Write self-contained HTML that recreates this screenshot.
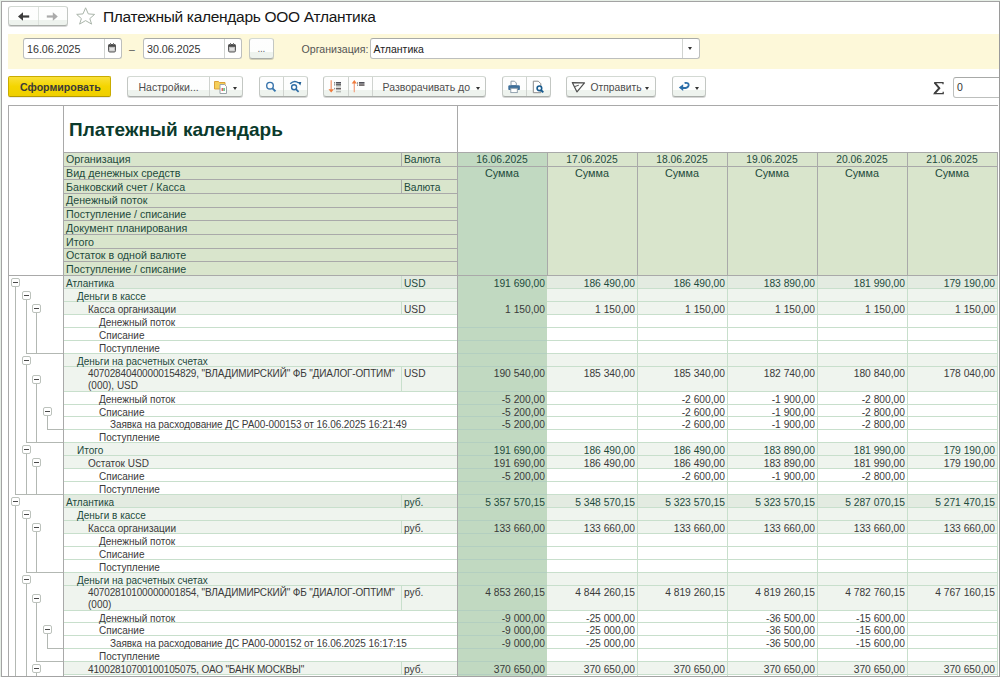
<!DOCTYPE html>
<html><head><meta charset="utf-8"><style>
html,body{margin:0;padding:0;width:1000px;height:677px;overflow:hidden;background:#e6eee6;}
body{position:relative;font-family:"Liberation Sans", sans-serif;}
.r{position:absolute;}
.t{position:absolute;white-space:nowrap;}
.btn{position:absolute;box-sizing:border-box;border:1px solid #c3c7c3;border-top-color:#d3d9d3;border-bottom-color:#a9ada9;border-radius:3px;background:linear-gradient(#fefefe 0,#fdfefd 66%,#eef3ee 66%,#eef3ee 100%);box-shadow:0 1px 0 rgba(0,0,0,0.16);}
.inp{position:absolute;box-sizing:border-box;border:1px solid #bdbfbd;border-top-color:#a8aaa8;border-radius:3px;background:#fff;}
.arr{position:absolute;width:0;height:0;border-left:2.5px solid transparent;border-right:2.5px solid transparent;border-top:3px solid #333;}
.cal{width:8px;height:7px;box-sizing:border-box;border:1px solid #666;border-top:2px solid #555;border-radius:1px;background:#f4f4f4;}
</style></head><body>
<div class="r" style="left:1px;top:1px;width:999px;height:676px;background:#fff;box-sizing:border-box;border:1px solid #a3a3a3;"></div>
<!-- nav -->
<div class="btn" style="left:8px;top:6px;width:60px;height:20px;background:linear-gradient(#fefefe 0,#fdfefd 74%,#eef3ee 74%,#eef3ee 100%);"></div>
<div class="r" style="left:38px;top:7px;width:1px;height:18px;background:#dde2dd;"></div>
<svg class="r" style="left:0;top:0" width="100" height="30" viewBox="0 0 100 30">
  <path d="M18 16.5 L23 12.3 L23 20.7 Z" fill="#3b3b3b"/>
  <rect x="22" y="15.4" width="7.2" height="2.2" fill="#3b3b3b"/>
  <path d="M57.8 16.5 L52.8 12.3 L52.8 20.7 Z" fill="#ababab"/>
  <rect x="46.8" y="15.4" width="6.5" height="2.2" fill="#ababab"/>
  <path d="M85.6 7.8 L88.3 13.9 L94.6 14.4 L89.8 18.6 L91.6 24.1 L85.6 20.6 L79.6 24.1 L81.4 18.6 L76.7 14.4 L83 13.9 Z" stroke="#aab5aa" stroke-width="1" fill="none" stroke-linejoin="round"/>
</svg>
<div class="t" style="left:103px;top:8.5px;font-size:15.5px;line-height:16px;color:#161616;letter-spacing:-0.3px;">Платежный календарь ООО Атлантика</div>
<!-- yellow band -->
<div class="r" style="left:8px;top:34px;width:992px;height:35px;background:#fdf8d9;"></div>
<!-- date 1 -->
<div class="inp" style="left:23px;top:38px;width:99px;height:21px;"></div>
<div class="r" style="left:104px;top:39px;width:1px;height:19px;background:#d0d3d0;"></div>
<div class="t" style="left:27px;top:42px;font-size:10.7px;line-height:14px;color:#333;">16.06.2025</div>
<svg class="r" style="left:107px;top:42px" width="10" height="11" viewBox="0 0 10 11">
  <rect x="1.5" y="2.5" width="7" height="7.5" rx="1.3" fill="#c4c4c4" stroke="#5a5a5a" stroke-width="1"/>
  <rect x="1.5" y="2.5" width="7" height="2.3" fill="#4a4a4a"/>
  <rect x="3" y="1" width="1" height="2" fill="#777"/>
  <rect x="6" y="1" width="1" height="2" fill="#777"/>
  <rect x="3" y="6" width="4" height="2.5" fill="#e2e2e2"/>
</svg>
<div class="t" style="left:129px;top:42px;font-size:10.5px;line-height:14px;color:#555;">–</div>
<!-- date 2 -->
<div class="inp" style="left:143px;top:38px;width:99px;height:21px;"></div>
<div class="r" style="left:224px;top:39px;width:1px;height:19px;background:#d0d3d0;"></div>
<div class="t" style="left:147px;top:42px;font-size:10.7px;line-height:14px;color:#333;">30.06.2025</div>
<svg class="r" style="left:227px;top:42px" width="10" height="11" viewBox="0 0 10 11">
  <rect x="1.5" y="2.5" width="7" height="7.5" rx="1.3" fill="#c4c4c4" stroke="#5a5a5a" stroke-width="1"/>
  <rect x="1.5" y="2.5" width="7" height="2.3" fill="#4a4a4a"/>
  <rect x="3" y="1" width="1" height="2" fill="#777"/>
  <rect x="6" y="1" width="1" height="2" fill="#777"/>
  <rect x="3" y="6" width="4" height="2.5" fill="#e2e2e2"/>
</svg>
<!-- ... button -->
<div class="btn" style="left:249px;top:38px;width:25px;height:21px;"></div>
<div class="t" style="left:257.5px;top:42px;font-size:10px;line-height:14px;color:#666;letter-spacing:-0.3px">...</div>
<div class="t" style="left:301.5px;top:42px;font-size:10.6px;line-height:14px;color:#555;">Организация:</div>
<div class="inp" style="left:370px;top:38px;width:330px;height:21px;"></div>
<div class="r" style="left:682px;top:39px;width:1px;height:19px;background:#d0d3d0;"></div>
<div class="t" style="left:373.5px;top:42px;font-size:10.5px;line-height:14px;color:#222;">Атлантика</div>
<div class="arr" style="left:688px;top:47px;"></div>
<!-- toolbar -->
<div class="r" style="left:8px;top:76px;width:103px;height:21px;box-sizing:border-box;border:1px solid #c9ac00;border-bottom-color:#b59a00;border-radius:2px;background:linear-gradient(#f9e03a,#f4d500 50%,#efcf00);box-shadow:0 1px 0 rgba(0,0,0,0.08);"></div>
<div class="t" style="left:20px;top:80px;font-size:10.6px;line-height:14px;color:#3a3a3a;font-weight:bold;">Сформировать</div>

<div class="btn" style="left:127px;top:76px;width:116px;height:21px;"></div>
<div class="r" style="left:209px;top:77px;width:1px;height:19px;background:#cfd3cf;"></div>
<div class="t" style="left:138.5px;top:80px;font-size:10.5px;line-height:14px;color:#4d4d4d;">Настройки...</div>
<svg class="r" style="left:212px;top:78px" width="18" height="18" viewBox="0 0 18 18">
  <path d="M2.5 3.5 h4 l1 1 h5.5 v6.5 h-10.5 z" fill="#f5cf5a" stroke="#dba23a" stroke-width="1"/>
  <path d="M8 6.5 h4.5 l2 2 v7 h-6.5 z" fill="#fff" stroke="#9aa3a8" stroke-width="1"/>
  <rect x="9.6" y="10" width="1.3" height="3" fill="#e05050"/>
  <rect x="11.4" y="10" width="1.3" height="3" fill="#40b060"/>
</svg>
<div class="arr" style="left:233px;top:87px;"></div>

<div class="btn" style="left:259px;top:76px;width:49px;height:21px;"></div>
<div class="r" style="left:283px;top:77px;width:1px;height:19px;background:#cfd3cf;"></div>
<svg class="r" style="left:259px;top:76px" width="50" height="21" viewBox="0 0 50 21">
  <circle cx="11" cy="9.7" r="3.3" stroke="#3874ac" stroke-width="1.4" fill="none"/>
  <path d="M13.5 12.3 L16.5 15.3" stroke="#3575ae" stroke-width="1.9"/>
  <circle cx="35.1" cy="11.2" r="2.5" stroke="#2f6ea6" stroke-width="1.4" fill="none"/>
  <path d="M36.9 13.1 L39.6 15.8" stroke="#2f6ea6" stroke-width="1.7"/>
  <path d="M31.2 7.8 Q35.3 3.6 39.6 7" stroke="#2f6ea6" stroke-width="1.3" fill="none"/>
  <path d="M38.6 6.1 L42.3 6.1 L41.3 9.6 Z" fill="#1f5f96"/>
</svg>

<div class="btn" style="left:323px;top:76px;width:163px;height:21px;"></div>
<div class="r" style="left:348px;top:77px;width:1px;height:19px;background:#cfd3cf;"></div>
<div class="r" style="left:372px;top:77px;width:1px;height:19px;background:#cfd3cf;"></div>
<svg class="r" style="left:323px;top:76px" width="50" height="21" viewBox="0 0 50 21">
  <path d="M8.2 4.3 V13.5" stroke="#f2a07a" stroke-width="1.4"/>
  <path d="M5.5 13.2 L10.9 13.2 L8.2 16.5 Z" fill="#f07a3a"/>
  <rect x="11" y="6" width="1.2" height="1.6" fill="#888"/>
  <rect x="11" y="8.1" width="1.2" height="1.5" fill="#999"/>
  <rect x="11" y="11.8" width="1.2" height="1.6" fill="#999"/>
  <rect x="13" y="6" width="5" height="1.6" fill="#4d4d55"/>
  <rect x="13" y="8.1" width="5" height="1.5" fill="#5a5a5a"/>
  <rect x="13" y="9.9" width="5" height="1.3" fill="#d0d4d0"/>
  <rect x="13" y="11.8" width="5" height="1.7" fill="#6a6262"/>
  <rect x="13" y="14.8" width="5" height="1.6" fill="#b8bcb8"/>
  <path d="M31.3 6.5 V16.3" stroke="#f3a585" stroke-width="1.3"/>
  <path d="M28.7 7.4 L33.9 7.4 L31.3 4.1 Z" fill="#f07a3a"/>
  <rect x="34" y="6.2" width="1.1" height="1.6" fill="#888"/>
  <rect x="34" y="8.4" width="1.1" height="1.6" fill="#999"/>
  <rect x="36" y="6" width="5.5" height="1.7" fill="#505058"/>
  <rect x="36" y="8.2" width="5.5" height="1.7" fill="#6a6464"/>
</svg>
<div class="t" style="left:382.5px;top:80px;font-size:10.5px;line-height:14px;color:#4d4d4d;">Разворачивать до</div>
<div class="arr" style="left:476px;top:87px;"></div>

<div class="btn" style="left:502px;top:76px;width:49px;height:21px;"></div>
<div class="r" style="left:526px;top:77px;width:1px;height:19px;background:#cfd3cf;"></div>
<svg class="r" style="left:502px;top:76px" width="50" height="21" viewBox="0 0 50 21">
  <path d="M9 5.2 h3.5 l1.8 1.8 v2.5 h-5.3 z" fill="#fff" stroke="#8a9aa8" stroke-width="1"/>
  <rect x="6.3" y="9.3" width="11.6" height="4.8" rx="1.2" fill="#3e6f9a"/>
  <rect x="8.8" y="12.3" width="6.5" height="4.3" fill="#fff" stroke="#8a9aa8" stroke-width="0.9"/>
  <path d="M31.3 5.2 h5 l2.5 2.5 v9 h-7.5 z" fill="#fff" stroke="#8a8a8a" stroke-width="1"/>
  <circle cx="37.4" cy="12.3" r="2.3" stroke="#165a8e" stroke-width="1.6" fill="#fff"/>
  <path d="M38.9 14 L41.3 16.4" stroke="#165a8e" stroke-width="1.9"/>
</svg>

<div class="btn" style="left:566px;top:76px;width:90px;height:21px;"></div>
<svg class="r" style="left:566px;top:76px" width="24" height="21" viewBox="0 0 24 21">
  <path d="M6.3 6.6 L18.5 6.9 L11 15.9 Z" stroke="#505050" stroke-width="1.2" fill="none" stroke-linejoin="round"/>
  <path d="M8.6 10.6 L12.8 9.2" stroke="#505050" stroke-width="1"/>
</svg>
<div class="t" style="left:590.5px;top:81px;font-size:10.3px;line-height:14px;color:#4d4d4d;">Отправить</div>
<div class="arr" style="left:645px;top:87px;"></div>

<div class="btn" style="left:672px;top:76px;width:34px;height:21px;"></div>
<svg class="r" style="left:672px;top:76px" width="34" height="21" viewBox="0 0 34 21">
  <path d="M10.5 12 Q15.8 12.4 16.6 9.4 Q17.1 6.2 12.6 7" stroke="#2b6ea8" stroke-width="1.9" fill="none"/>
  <path d="M6.8 11.6 L11.2 8.3 L11.2 15 Z" fill="#2b6ea8"/>
</svg>
<div class="arr" style="left:694.5px;top:87px;"></div>

<svg class="r" style="left:930px;top:78px" width="16" height="18" viewBox="0 0 16 18">
  <path d="M4.2 4.6 H13 V6.3 M4.6 4.6 L9.3 10.2 L4.4 15.6 H13.2 V13.8" stroke="#404040" stroke-width="1.3" fill="none" stroke-linejoin="miter"/>
  <path d="M4.6 4.6 L9.3 10.2 L4.4 15.6" stroke="#404040" stroke-width="1.9" fill="none"/>
</svg>
<div class="inp" style="left:953px;top:77px;width:60px;height:21px;border-radius:3px;"></div>
<div class="t" style="left:957px;top:80px;font-size:10.5px;line-height:14px;color:#333;">0</div>

<div class="r" style="left:2px;top:2px;width:996px;height:674px;overflow:hidden;">
<div class="r" style="left:61px;top:150px;width:945px;height:123px;background:#d9e5cc;"></div>
<div class="r" style="left:455px;top:150px;width:90px;height:123px;background:#c1d9c1;"></div>
<div class="r" style="left:61px;top:273px;width:945px;height:13px;background:#e3ebe1;"></div>
<div class="r" style="left:61px;top:286px;width:945px;height:13px;background:#eff4ee;"></div>
<div class="r" style="left:61px;top:299px;width:945px;height:13px;background:#eff4ee;"></div>
<div class="r" style="left:61px;top:312px;width:945px;height:13px;background:#fff;"></div>
<div class="r" style="left:61px;top:325px;width:945px;height:13px;background:#fff;"></div>
<div class="r" style="left:61px;top:338px;width:945px;height:13px;background:#fff;"></div>
<div class="r" style="left:61px;top:351px;width:945px;height:13px;background:#eff4ee;"></div>
<div class="r" style="left:61px;top:364px;width:945px;height:25px;background:#eff4ee;"></div>
<div class="r" style="left:61px;top:389px;width:945px;height:13px;background:#fff;"></div>
<div class="r" style="left:61px;top:402px;width:945px;height:12px;background:#fff;"></div>
<div class="r" style="left:61px;top:414px;width:945px;height:13px;background:#fff;"></div>
<div class="r" style="left:61px;top:427px;width:945px;height:13px;background:#fff;"></div>
<div class="r" style="left:61px;top:440px;width:945px;height:13px;background:#eff4ee;"></div>
<div class="r" style="left:61px;top:453px;width:945px;height:13px;background:#eff4ee;"></div>
<div class="r" style="left:61px;top:466px;width:945px;height:13px;background:#fff;"></div>
<div class="r" style="left:61px;top:479px;width:945px;height:13px;background:#fff;"></div>
<div class="r" style="left:61px;top:492px;width:945px;height:13px;background:#e3ebe1;"></div>
<div class="r" style="left:61px;top:505px;width:945px;height:13px;background:#eff4ee;"></div>
<div class="r" style="left:61px;top:518px;width:945px;height:13px;background:#eff4ee;"></div>
<div class="r" style="left:61px;top:531px;width:945px;height:13px;background:#fff;"></div>
<div class="r" style="left:61px;top:544px;width:945px;height:13px;background:#fff;"></div>
<div class="r" style="left:61px;top:557px;width:945px;height:13px;background:#fff;"></div>
<div class="r" style="left:61px;top:570px;width:945px;height:13px;background:#eff4ee;"></div>
<div class="r" style="left:61px;top:583px;width:945px;height:25px;background:#eff4ee;"></div>
<div class="r" style="left:61px;top:608px;width:945px;height:12px;background:#fff;"></div>
<div class="r" style="left:61px;top:620px;width:945px;height:13px;background:#fff;"></div>
<div class="r" style="left:61px;top:633px;width:945px;height:13px;background:#fff;"></div>
<div class="r" style="left:61px;top:646px;width:945px;height:13px;background:#fff;"></div>
<div class="r" style="left:61px;top:659px;width:945px;height:13px;background:#eff4ee;"></div>
<div class="r" style="left:61px;top:286px;width:945px;height:1px;background:#c8dfcc;"></div>
<div class="r" style="left:399px;top:273px;width:1px;height:13px;background:#c8dfcc;"></div>
<div class="r" style="left:61px;top:299px;width:945px;height:1px;background:#c8dfcc;"></div>
<div class="r" style="left:61px;top:312px;width:945px;height:1px;background:#c8dfcc;"></div>
<div class="r" style="left:399px;top:299px;width:1px;height:13px;background:#c8dfcc;"></div>
<div class="r" style="left:61px;top:325px;width:945px;height:1px;background:#c8dfcc;"></div>
<div class="r" style="left:61px;top:338px;width:945px;height:1px;background:#c8dfcc;"></div>
<div class="r" style="left:61px;top:351px;width:945px;height:1px;background:#c8dfcc;"></div>
<div class="r" style="left:61px;top:364px;width:945px;height:1px;background:#c8dfcc;"></div>
<div class="r" style="left:61px;top:389px;width:945px;height:1px;background:#c8dfcc;"></div>
<div class="r" style="left:399px;top:364px;width:1px;height:25px;background:#c8dfcc;"></div>
<div class="r" style="left:61px;top:402px;width:945px;height:1px;background:#c8dfcc;"></div>
<div class="r" style="left:61px;top:414px;width:945px;height:1px;background:#c8dfcc;"></div>
<div class="r" style="left:61px;top:427px;width:945px;height:1px;background:#c8dfcc;"></div>
<div class="r" style="left:61px;top:440px;width:945px;height:1px;background:#c8dfcc;"></div>
<div class="r" style="left:61px;top:453px;width:945px;height:1px;background:#c8dfcc;"></div>
<div class="r" style="left:61px;top:466px;width:945px;height:1px;background:#c8dfcc;"></div>
<div class="r" style="left:61px;top:479px;width:945px;height:1px;background:#c8dfcc;"></div>
<div class="r" style="left:61px;top:492px;width:945px;height:1px;background:#c8dfcc;"></div>
<div class="r" style="left:61px;top:505px;width:945px;height:1px;background:#c8dfcc;"></div>
<div class="r" style="left:399px;top:492px;width:1px;height:13px;background:#c8dfcc;"></div>
<div class="r" style="left:61px;top:518px;width:945px;height:1px;background:#c8dfcc;"></div>
<div class="r" style="left:61px;top:531px;width:945px;height:1px;background:#c8dfcc;"></div>
<div class="r" style="left:399px;top:518px;width:1px;height:13px;background:#c8dfcc;"></div>
<div class="r" style="left:61px;top:544px;width:945px;height:1px;background:#c8dfcc;"></div>
<div class="r" style="left:61px;top:557px;width:945px;height:1px;background:#c8dfcc;"></div>
<div class="r" style="left:61px;top:570px;width:945px;height:1px;background:#c8dfcc;"></div>
<div class="r" style="left:61px;top:583px;width:945px;height:1px;background:#c8dfcc;"></div>
<div class="r" style="left:61px;top:608px;width:945px;height:1px;background:#c8dfcc;"></div>
<div class="r" style="left:399px;top:583px;width:1px;height:25px;background:#c8dfcc;"></div>
<div class="r" style="left:61px;top:620px;width:945px;height:1px;background:#c8dfcc;"></div>
<div class="r" style="left:61px;top:633px;width:945px;height:1px;background:#c8dfcc;"></div>
<div class="r" style="left:61px;top:646px;width:945px;height:1px;background:#c8dfcc;"></div>
<div class="r" style="left:61px;top:659px;width:945px;height:1px;background:#c8dfcc;"></div>
<div class="r" style="left:61px;top:672px;width:945px;height:1px;background:#c8dfcc;"></div>
<div class="r" style="left:399px;top:659px;width:1px;height:13px;background:#c8dfcc;"></div>
<div class="r" style="left:455px;top:273px;width:90px;height:700px;background:#c1d9c1;"></div>
<div class="r" style="left:455px;top:325px;width:90px;height:1px;background:#b3cfc0;"></div>
<div class="r" style="left:455px;top:338px;width:90px;height:1px;background:#b3cfc0;"></div>
<div class="r" style="left:455px;top:351px;width:90px;height:1px;background:#b3cfc0;"></div>
<div class="r" style="left:455px;top:364px;width:90px;height:1px;background:#b3cfc0;"></div>
<div class="r" style="left:455px;top:389px;width:90px;height:1px;background:#b3cfc0;"></div>
<div class="r" style="left:455px;top:402px;width:90px;height:1px;background:#b3cfc0;"></div>
<div class="r" style="left:455px;top:414px;width:90px;height:1px;background:#b3cfc0;"></div>
<div class="r" style="left:455px;top:427px;width:90px;height:1px;background:#b3cfc0;"></div>
<div class="r" style="left:455px;top:440px;width:90px;height:1px;background:#b3cfc0;"></div>
<div class="r" style="left:455px;top:453px;width:90px;height:1px;background:#b3cfc0;"></div>
<div class="r" style="left:455px;top:466px;width:90px;height:1px;background:#b3cfc0;"></div>
<div class="r" style="left:455px;top:479px;width:90px;height:1px;background:#b3cfc0;"></div>
<div class="r" style="left:455px;top:492px;width:90px;height:1px;background:#b3cfc0;"></div>
<div class="r" style="left:455px;top:505px;width:90px;height:1px;background:#b3cfc0;"></div>
<div class="r" style="left:455px;top:518px;width:90px;height:1px;background:#b3cfc0;"></div>
<div class="r" style="left:455px;top:531px;width:90px;height:1px;background:#b3cfc0;"></div>
<div class="r" style="left:455px;top:544px;width:90px;height:1px;background:#b3cfc0;"></div>
<div class="r" style="left:455px;top:557px;width:90px;height:1px;background:#b3cfc0;"></div>
<div class="r" style="left:455px;top:570px;width:90px;height:1px;background:#b3cfc0;"></div>
<div class="r" style="left:455px;top:583px;width:90px;height:1px;background:#b3cfc0;"></div>
<div class="r" style="left:455px;top:608px;width:90px;height:1px;background:#b3cfc0;"></div>
<div class="r" style="left:455px;top:620px;width:90px;height:1px;background:#b3cfc0;"></div>
<div class="r" style="left:455px;top:633px;width:90px;height:1px;background:#b3cfc0;"></div>
<div class="r" style="left:455px;top:646px;width:90px;height:1px;background:#b3cfc0;"></div>
<div class="r" style="left:455px;top:659px;width:90px;height:1px;background:#b3cfc0;"></div>
<div class="r" style="left:455px;top:672px;width:90px;height:1px;background:#b3cfc0;"></div>
<div class="r" style="left:635px;top:273px;width:1px;height:700px;background:#c8dfcc;"></div>
<div class="r" style="left:725px;top:273px;width:1px;height:700px;background:#c8dfcc;"></div>
<div class="r" style="left:815px;top:273px;width:1px;height:700px;background:#c8dfcc;"></div>
<div class="r" style="left:905px;top:273px;width:1px;height:700px;background:#c8dfcc;"></div>
<div class="r" style="left:995px;top:273px;width:1px;height:700px;background:#c8dfcc;"></div>
<div class="r" style="left:61px;top:150px;width:945px;height:1px;background:#a9a9a9;"></div>
<div class="r" style="left:61px;top:164px;width:394px;height:1px;background:#a9a9a9;"></div>
<div class="r" style="left:61px;top:177px;width:394px;height:1px;background:#a9a9a9;"></div>
<div class="r" style="left:61px;top:191px;width:394px;height:1px;background:#a9a9a9;"></div>
<div class="r" style="left:61px;top:205px;width:394px;height:1px;background:#a9a9a9;"></div>
<div class="r" style="left:61px;top:218px;width:394px;height:1px;background:#a9a9a9;"></div>
<div class="r" style="left:61px;top:232px;width:394px;height:1px;background:#a9a9a9;"></div>
<div class="r" style="left:61px;top:246px;width:394px;height:1px;background:#a9a9a9;"></div>
<div class="r" style="left:61px;top:259px;width:394px;height:1px;background:#a9a9a9;"></div>
<div class="r" style="left:455px;top:164px;width:551px;height:1px;background:#a9a9a9;"></div>
<div class="r" style="left:6px;top:273px;width:1000px;height:1px;background:#a9a9a9;"></div>
<div class="r" style="left:399px;top:150px;width:1px;height:14px;background:#a9a9a9;"></div>
<div class="r" style="left:399px;top:177px;width:1px;height:14px;background:#a9a9a9;"></div>
<div class="r" style="left:545px;top:150px;width:1px;height:123px;background:#a9a9a9;"></div>
<div class="r" style="left:635px;top:150px;width:1px;height:123px;background:#a9a9a9;"></div>
<div class="r" style="left:725px;top:150px;width:1px;height:123px;background:#a9a9a9;"></div>
<div class="r" style="left:815px;top:150px;width:1px;height:123px;background:#a9a9a9;"></div>
<div class="r" style="left:905px;top:150px;width:1px;height:123px;background:#a9a9a9;"></div>
<div class="r" style="left:995px;top:150px;width:1px;height:123px;background:#a9a9a9;"></div>
<div class="r" style="left:6px;top:103px;width:1000px;height:1px;background:#a9a9a9;"></div>
<div class="r" style="left:6px;top:103px;width:1px;height:700px;background:#a9a9a9;"></div>
<div class="r" style="left:61px;top:103px;width:1px;height:700px;background:#a9a9a9;"></div>
<div class="r" style="left:455px;top:103px;width:1px;height:700px;background:#a9a9a9;"></div>
<div class="r" style="left:13px;top:285px;width:1px;height:207px;background:#b3b8b3;"></div>
<div class="r" style="left:13px;top:492px;width:48px;height:1px;background:#b3b8b3;"></div>
<div class="r" style="left:9px;top:276px;width:9px;height:9px;background:#fff;box-sizing:border-box;border:1px solid #bcc2bc;border-radius:2px;"></div>
<div class="r" style="left:11px;top:280px;width:5px;height:1px;background:#4a4a4a;"></div>
<div class="r" style="left:24px;top:298px;width:1px;height:53px;background:#b3b8b3;"></div>
<div class="r" style="left:24px;top:351px;width:37px;height:1px;background:#b3b8b3;"></div>
<div class="r" style="left:20px;top:289px;width:9px;height:9px;background:#fff;box-sizing:border-box;border:1px solid #bcc2bc;border-radius:2px;"></div>
<div class="r" style="left:22px;top:293px;width:5px;height:1px;background:#4a4a4a;"></div>
<div class="r" style="left:34px;top:311px;width:1px;height:40px;background:#b3b8b3;"></div>
<div class="r" style="left:34px;top:351px;width:27px;height:1px;background:#b3b8b3;"></div>
<div class="r" style="left:30px;top:302px;width:9px;height:9px;background:#fff;box-sizing:border-box;border:1px solid #bcc2bc;border-radius:2px;"></div>
<div class="r" style="left:32px;top:306px;width:5px;height:1px;background:#4a4a4a;"></div>
<div class="r" style="left:24px;top:363px;width:1px;height:77px;background:#b3b8b3;"></div>
<div class="r" style="left:24px;top:440px;width:37px;height:1px;background:#b3b8b3;"></div>
<div class="r" style="left:20px;top:354px;width:9px;height:9px;background:#fff;box-sizing:border-box;border:1px solid #bcc2bc;border-radius:2px;"></div>
<div class="r" style="left:22px;top:358px;width:5px;height:1px;background:#4a4a4a;"></div>
<div class="r" style="left:34px;top:382px;width:1px;height:58px;background:#b3b8b3;"></div>
<div class="r" style="left:34px;top:440px;width:27px;height:1px;background:#b3b8b3;"></div>
<div class="r" style="left:30px;top:373px;width:9px;height:9px;background:#fff;box-sizing:border-box;border:1px solid #bcc2bc;border-radius:2px;"></div>
<div class="r" style="left:32px;top:377px;width:5px;height:1px;background:#4a4a4a;"></div>
<div class="r" style="left:45px;top:414px;width:1px;height:13px;background:#b3b8b3;"></div>
<div class="r" style="left:45px;top:427px;width:16px;height:1px;background:#b3b8b3;"></div>
<div class="r" style="left:41px;top:405px;width:9px;height:9px;background:#fff;box-sizing:border-box;border:1px solid #bcc2bc;border-radius:2px;"></div>
<div class="r" style="left:43px;top:409px;width:5px;height:1px;background:#4a4a4a;"></div>
<div class="r" style="left:24px;top:452px;width:1px;height:40px;background:#b3b8b3;"></div>
<div class="r" style="left:24px;top:492px;width:37px;height:1px;background:#b3b8b3;"></div>
<div class="r" style="left:20px;top:443px;width:9px;height:9px;background:#fff;box-sizing:border-box;border:1px solid #bcc2bc;border-radius:2px;"></div>
<div class="r" style="left:22px;top:447px;width:5px;height:1px;background:#4a4a4a;"></div>
<div class="r" style="left:34px;top:465px;width:1px;height:27px;background:#b3b8b3;"></div>
<div class="r" style="left:34px;top:492px;width:27px;height:1px;background:#b3b8b3;"></div>
<div class="r" style="left:30px;top:456px;width:9px;height:9px;background:#fff;box-sizing:border-box;border:1px solid #bcc2bc;border-radius:2px;"></div>
<div class="r" style="left:32px;top:460px;width:5px;height:1px;background:#4a4a4a;"></div>
<div class="r" style="left:13px;top:504px;width:1px;height:194px;background:#b3b8b3;"></div>
<div class="r" style="left:9px;top:495px;width:9px;height:9px;background:#fff;box-sizing:border-box;border:1px solid #bcc2bc;border-radius:2px;"></div>
<div class="r" style="left:11px;top:499px;width:5px;height:1px;background:#4a4a4a;"></div>
<div class="r" style="left:24px;top:517px;width:1px;height:53px;background:#b3b8b3;"></div>
<div class="r" style="left:24px;top:570px;width:37px;height:1px;background:#b3b8b3;"></div>
<div class="r" style="left:20px;top:508px;width:9px;height:9px;background:#fff;box-sizing:border-box;border:1px solid #bcc2bc;border-radius:2px;"></div>
<div class="r" style="left:22px;top:512px;width:5px;height:1px;background:#4a4a4a;"></div>
<div class="r" style="left:34px;top:530px;width:1px;height:40px;background:#b3b8b3;"></div>
<div class="r" style="left:34px;top:570px;width:27px;height:1px;background:#b3b8b3;"></div>
<div class="r" style="left:30px;top:521px;width:9px;height:9px;background:#fff;box-sizing:border-box;border:1px solid #bcc2bc;border-radius:2px;"></div>
<div class="r" style="left:32px;top:525px;width:5px;height:1px;background:#4a4a4a;"></div>
<div class="r" style="left:24px;top:582px;width:1px;height:116px;background:#b3b8b3;"></div>
<div class="r" style="left:20px;top:573px;width:9px;height:9px;background:#fff;box-sizing:border-box;border:1px solid #bcc2bc;border-radius:2px;"></div>
<div class="r" style="left:22px;top:577px;width:5px;height:1px;background:#4a4a4a;"></div>
<div class="r" style="left:34px;top:601px;width:1px;height:58px;background:#b3b8b3;"></div>
<div class="r" style="left:34px;top:659px;width:27px;height:1px;background:#b3b8b3;"></div>
<div class="r" style="left:30px;top:592px;width:9px;height:9px;background:#fff;box-sizing:border-box;border:1px solid #bcc2bc;border-radius:2px;"></div>
<div class="r" style="left:32px;top:596px;width:5px;height:1px;background:#4a4a4a;"></div>
<div class="r" style="left:45px;top:632px;width:1px;height:14px;background:#b3b8b3;"></div>
<div class="r" style="left:45px;top:646px;width:16px;height:1px;background:#b3b8b3;"></div>
<div class="r" style="left:41px;top:623px;width:9px;height:9px;background:#fff;box-sizing:border-box;border:1px solid #bcc2bc;border-radius:2px;"></div>
<div class="r" style="left:43px;top:627px;width:5px;height:1px;background:#4a4a4a;"></div>
<div class="r" style="left:34px;top:671px;width:1px;height:27px;background:#b3b8b3;"></div>
<div class="r" style="left:30px;top:662px;width:9px;height:9px;background:#fff;box-sizing:border-box;border:1px solid #bcc2bc;border-radius:2px;"></div>
<div class="r" style="left:32px;top:666px;width:5px;height:1px;background:#4a4a4a;"></div>
<div class="t" style="left:67px;top:121.00px;font-size:19px;line-height:14px;color:#0b3a2c;font-weight:bold;">Платежный календарь</div>
<div class="t" style="left:64px;top:150.00px;font-size:10.7px;line-height:14px;color:#1d4a3c;">Организация</div>
<div class="t" style="left:64px;top:164.00px;font-size:10.7px;line-height:14px;color:#1d4a3c;">Вид денежных средств</div>
<div class="t" style="left:64px;top:178.00px;font-size:10.7px;line-height:14px;color:#1d4a3c;">Банковский счет / Касса</div>
<div class="t" style="left:64px;top:191.00px;font-size:10.7px;line-height:14px;color:#1d4a3c;">Денежный поток</div>
<div class="t" style="left:64px;top:205.00px;font-size:10.7px;line-height:14px;color:#1d4a3c;">Поступление / списание</div>
<div class="t" style="left:64px;top:219.00px;font-size:10.7px;line-height:14px;color:#1d4a3c;">Документ планирования</div>
<div class="t" style="left:64px;top:233.00px;font-size:10.7px;line-height:14px;color:#1d4a3c;">Итого</div>
<div class="t" style="left:64px;top:246.00px;font-size:10.7px;line-height:14px;color:#1d4a3c;">Остаток в одной валюте</div>
<div class="t" style="left:64px;top:260.00px;font-size:10.7px;line-height:14px;color:#1d4a3c;">Поступление / списание</div>
<div class="t" style="left:402px;top:151.00px;font-size:10.3px;line-height:14px;color:#1d4a3c;">Валюта</div>
<div class="t" style="left:402px;top:179.00px;font-size:10.3px;line-height:14px;color:#1d4a3c;">Валюта</div>
<div class="t" style="left:455px;top:151.00px;font-size:10.3px;line-height:14px;color:#1d4a3c;width:90px;text-align:center;">16.06.2025</div>
<div class="t" style="left:455px;top:164.00px;font-size:10.8px;line-height:14px;color:#1d4a3c;width:90px;text-align:center;">Сумма</div>
<div class="t" style="left:545px;top:151.00px;font-size:10.3px;line-height:14px;color:#1d4a3c;width:90px;text-align:center;">17.06.2025</div>
<div class="t" style="left:545px;top:164.00px;font-size:10.8px;line-height:14px;color:#1d4a3c;width:90px;text-align:center;">Сумма</div>
<div class="t" style="left:635px;top:151.00px;font-size:10.3px;line-height:14px;color:#1d4a3c;width:90px;text-align:center;">18.06.2025</div>
<div class="t" style="left:635px;top:164.00px;font-size:10.8px;line-height:14px;color:#1d4a3c;width:90px;text-align:center;">Сумма</div>
<div class="t" style="left:725px;top:151.00px;font-size:10.3px;line-height:14px;color:#1d4a3c;width:90px;text-align:center;">19.06.2025</div>
<div class="t" style="left:725px;top:164.00px;font-size:10.8px;line-height:14px;color:#1d4a3c;width:90px;text-align:center;">Сумма</div>
<div class="t" style="left:815px;top:151.00px;font-size:10.3px;line-height:14px;color:#1d4a3c;width:90px;text-align:center;">20.06.2025</div>
<div class="t" style="left:815px;top:164.00px;font-size:10.8px;line-height:14px;color:#1d4a3c;width:90px;text-align:center;">Сумма</div>
<div class="t" style="left:905px;top:151.00px;font-size:10.3px;line-height:14px;color:#1d4a3c;width:90px;text-align:center;">21.06.2025</div>
<div class="t" style="left:905px;top:164.00px;font-size:10.8px;line-height:14px;color:#1d4a3c;width:90px;text-align:center;">Сумма</div>
<div class="t" style="left:64px;top:275.00px;font-size:10.0px;line-height:14px;color:#1d4a3c;letter-spacing:0px;">Атлантика</div>
<div class="t" style="left:402px;top:275.00px;font-size:10.2px;line-height:14px;color:#1d4a3c;">USD</div>
<div class="t" style="left:455px;top:275.00px;font-size:10.25px;line-height:14px;color:#1d4a3c;width:88px;text-align:right;">191 690,00</div>
<div class="t" style="left:545px;top:275.00px;font-size:10.25px;line-height:14px;color:#1d4a3c;width:88px;text-align:right;">186 490,00</div>
<div class="t" style="left:635px;top:275.00px;font-size:10.25px;line-height:14px;color:#1d4a3c;width:88px;text-align:right;">186 490,00</div>
<div class="t" style="left:725px;top:275.00px;font-size:10.25px;line-height:14px;color:#1d4a3c;width:88px;text-align:right;">183 890,00</div>
<div class="t" style="left:815px;top:275.00px;font-size:10.25px;line-height:14px;color:#1d4a3c;width:88px;text-align:right;">181 990,00</div>
<div class="t" style="left:905px;top:275.00px;font-size:10.25px;line-height:14px;color:#1d4a3c;width:88px;text-align:right;">179 190,00</div>
<div class="t" style="left:75px;top:288.00px;font-size:10.0px;line-height:14px;color:#1d4a3c;letter-spacing:0px;">Деньги в кассе</div>
<div class="t" style="left:86px;top:301.00px;font-size:10.0px;line-height:14px;color:#3a3a3a;letter-spacing:0px;">Касса организации</div>
<div class="t" style="left:402px;top:301.00px;font-size:10.2px;line-height:14px;color:#3a3a3a;">USD</div>
<div class="t" style="left:455px;top:301.00px;font-size:10.25px;line-height:14px;color:#3a3a3a;width:88px;text-align:right;">1 150,00</div>
<div class="t" style="left:545px;top:301.00px;font-size:10.25px;line-height:14px;color:#3a3a3a;width:88px;text-align:right;">1 150,00</div>
<div class="t" style="left:635px;top:301.00px;font-size:10.25px;line-height:14px;color:#3a3a3a;width:88px;text-align:right;">1 150,00</div>
<div class="t" style="left:725px;top:301.00px;font-size:10.25px;line-height:14px;color:#3a3a3a;width:88px;text-align:right;">1 150,00</div>
<div class="t" style="left:815px;top:301.00px;font-size:10.25px;line-height:14px;color:#3a3a3a;width:88px;text-align:right;">1 150,00</div>
<div class="t" style="left:905px;top:301.00px;font-size:10.25px;line-height:14px;color:#3a3a3a;width:88px;text-align:right;">1 150,00</div>
<div class="t" style="left:97px;top:314.00px;font-size:10.0px;line-height:14px;color:#3a3a3a;letter-spacing:0px;">Денежный поток</div>
<div class="t" style="left:97px;top:327.00px;font-size:10.0px;line-height:14px;color:#3a3a3a;letter-spacing:0px;">Списание</div>
<div class="t" style="left:97px;top:340.00px;font-size:10.0px;line-height:14px;color:#3a3a3a;letter-spacing:0px;">Поступление</div>
<div class="t" style="left:75px;top:353.00px;font-size:10.0px;line-height:14px;color:#1d4a3c;letter-spacing:0px;">Деньги на расчетных счетах</div>
<div class="t" style="left:86px;top:365.00px;font-size:10.0px;line-height:14px;color:#3a3a3a;letter-spacing:-0.15px;">40702840400000154829, "ВЛАДИМИРСКИЙ" ФБ "ДИАЛОГ-ОПТИМ"</div>
<div class="t" style="left:86px;top:377.00px;font-size:10.0px;line-height:14px;color:#3a3a3a;letter-spacing:0px;">(000), USD</div>
<div class="t" style="left:402px;top:365.00px;font-size:10.2px;line-height:14px;color:#3a3a3a;">USD</div>
<div class="t" style="left:455px;top:365.00px;font-size:10.25px;line-height:14px;color:#3a3a3a;width:88px;text-align:right;">190 540,00</div>
<div class="t" style="left:545px;top:365.00px;font-size:10.25px;line-height:14px;color:#3a3a3a;width:88px;text-align:right;">185 340,00</div>
<div class="t" style="left:635px;top:365.00px;font-size:10.25px;line-height:14px;color:#3a3a3a;width:88px;text-align:right;">185 340,00</div>
<div class="t" style="left:725px;top:365.00px;font-size:10.25px;line-height:14px;color:#3a3a3a;width:88px;text-align:right;">182 740,00</div>
<div class="t" style="left:815px;top:365.00px;font-size:10.25px;line-height:14px;color:#3a3a3a;width:88px;text-align:right;">180 840,00</div>
<div class="t" style="left:905px;top:365.00px;font-size:10.25px;line-height:14px;color:#3a3a3a;width:88px;text-align:right;">178 040,00</div>
<div class="t" style="left:97px;top:391.00px;font-size:10.0px;line-height:14px;color:#3a3a3a;letter-spacing:0px;">Денежный поток</div>
<div class="t" style="left:455px;top:391.00px;font-size:10.25px;line-height:14px;color:#3a3a3a;width:88px;text-align:right;">-5 200,00</div>
<div class="t" style="left:635px;top:391.00px;font-size:10.25px;line-height:14px;color:#3a3a3a;width:88px;text-align:right;">-2 600,00</div>
<div class="t" style="left:725px;top:391.00px;font-size:10.25px;line-height:14px;color:#3a3a3a;width:88px;text-align:right;">-1 900,00</div>
<div class="t" style="left:815px;top:391.00px;font-size:10.25px;line-height:14px;color:#3a3a3a;width:88px;text-align:right;">-2 800,00</div>
<div class="t" style="left:97px;top:404.00px;font-size:10.0px;line-height:14px;color:#3a3a3a;letter-spacing:0px;">Списание</div>
<div class="t" style="left:455px;top:404.00px;font-size:10.25px;line-height:14px;color:#3a3a3a;width:88px;text-align:right;">-5 200,00</div>
<div class="t" style="left:635px;top:404.00px;font-size:10.25px;line-height:14px;color:#3a3a3a;width:88px;text-align:right;">-2 600,00</div>
<div class="t" style="left:725px;top:404.00px;font-size:10.25px;line-height:14px;color:#3a3a3a;width:88px;text-align:right;">-1 900,00</div>
<div class="t" style="left:815px;top:404.00px;font-size:10.25px;line-height:14px;color:#3a3a3a;width:88px;text-align:right;">-2 800,00</div>
<div class="t" style="left:108px;top:416.00px;font-size:10.0px;line-height:14px;color:#3a3a3a;letter-spacing:-0.08px;">Заявка на расходование ДС РА00-000153 от 16.06.2025 16:21:49</div>
<div class="t" style="left:455px;top:416.00px;font-size:10.25px;line-height:14px;color:#3a3a3a;width:88px;text-align:right;">-5 200,00</div>
<div class="t" style="left:635px;top:416.00px;font-size:10.25px;line-height:14px;color:#3a3a3a;width:88px;text-align:right;">-2 600,00</div>
<div class="t" style="left:725px;top:416.00px;font-size:10.25px;line-height:14px;color:#3a3a3a;width:88px;text-align:right;">-1 900,00</div>
<div class="t" style="left:815px;top:416.00px;font-size:10.25px;line-height:14px;color:#3a3a3a;width:88px;text-align:right;">-2 800,00</div>
<div class="t" style="left:97px;top:429.00px;font-size:10.0px;line-height:14px;color:#3a3a3a;letter-spacing:0px;">Поступление</div>
<div class="t" style="left:75px;top:442.00px;font-size:10.0px;line-height:14px;color:#1d4a3c;letter-spacing:0px;">Итого</div>
<div class="t" style="left:455px;top:442.00px;font-size:10.25px;line-height:14px;color:#1d4a3c;width:88px;text-align:right;">191 690,00</div>
<div class="t" style="left:545px;top:442.00px;font-size:10.25px;line-height:14px;color:#1d4a3c;width:88px;text-align:right;">186 490,00</div>
<div class="t" style="left:635px;top:442.00px;font-size:10.25px;line-height:14px;color:#1d4a3c;width:88px;text-align:right;">186 490,00</div>
<div class="t" style="left:725px;top:442.00px;font-size:10.25px;line-height:14px;color:#1d4a3c;width:88px;text-align:right;">183 890,00</div>
<div class="t" style="left:815px;top:442.00px;font-size:10.25px;line-height:14px;color:#1d4a3c;width:88px;text-align:right;">181 990,00</div>
<div class="t" style="left:905px;top:442.00px;font-size:10.25px;line-height:14px;color:#1d4a3c;width:88px;text-align:right;">179 190,00</div>
<div class="t" style="left:86px;top:455.00px;font-size:10.0px;line-height:14px;color:#3a3a3a;letter-spacing:0px;">Остаток USD</div>
<div class="t" style="left:455px;top:455.00px;font-size:10.25px;line-height:14px;color:#3a3a3a;width:88px;text-align:right;">191 690,00</div>
<div class="t" style="left:545px;top:455.00px;font-size:10.25px;line-height:14px;color:#3a3a3a;width:88px;text-align:right;">186 490,00</div>
<div class="t" style="left:635px;top:455.00px;font-size:10.25px;line-height:14px;color:#3a3a3a;width:88px;text-align:right;">186 490,00</div>
<div class="t" style="left:725px;top:455.00px;font-size:10.25px;line-height:14px;color:#3a3a3a;width:88px;text-align:right;">183 890,00</div>
<div class="t" style="left:815px;top:455.00px;font-size:10.25px;line-height:14px;color:#3a3a3a;width:88px;text-align:right;">181 990,00</div>
<div class="t" style="left:905px;top:455.00px;font-size:10.25px;line-height:14px;color:#3a3a3a;width:88px;text-align:right;">179 190,00</div>
<div class="t" style="left:97px;top:468.00px;font-size:10.0px;line-height:14px;color:#3a3a3a;letter-spacing:0px;">Списание</div>
<div class="t" style="left:455px;top:468.00px;font-size:10.25px;line-height:14px;color:#3a3a3a;width:88px;text-align:right;">-5 200,00</div>
<div class="t" style="left:635px;top:468.00px;font-size:10.25px;line-height:14px;color:#3a3a3a;width:88px;text-align:right;">-2 600,00</div>
<div class="t" style="left:725px;top:468.00px;font-size:10.25px;line-height:14px;color:#3a3a3a;width:88px;text-align:right;">-1 900,00</div>
<div class="t" style="left:815px;top:468.00px;font-size:10.25px;line-height:14px;color:#3a3a3a;width:88px;text-align:right;">-2 800,00</div>
<div class="t" style="left:97px;top:481.00px;font-size:10.0px;line-height:14px;color:#3a3a3a;letter-spacing:0px;">Поступление</div>
<div class="t" style="left:64px;top:494.00px;font-size:10.0px;line-height:14px;color:#1d4a3c;letter-spacing:0px;">Атлантика</div>
<div class="t" style="left:402px;top:494.00px;font-size:10.2px;line-height:14px;color:#1d4a3c;">руб.</div>
<div class="t" style="left:455px;top:494.00px;font-size:10.25px;line-height:14px;color:#1d4a3c;width:88px;text-align:right;">5 357 570,15</div>
<div class="t" style="left:545px;top:494.00px;font-size:10.25px;line-height:14px;color:#1d4a3c;width:88px;text-align:right;">5 348 570,15</div>
<div class="t" style="left:635px;top:494.00px;font-size:10.25px;line-height:14px;color:#1d4a3c;width:88px;text-align:right;">5 323 570,15</div>
<div class="t" style="left:725px;top:494.00px;font-size:10.25px;line-height:14px;color:#1d4a3c;width:88px;text-align:right;">5 323 570,15</div>
<div class="t" style="left:815px;top:494.00px;font-size:10.25px;line-height:14px;color:#1d4a3c;width:88px;text-align:right;">5 287 070,15</div>
<div class="t" style="left:905px;top:494.00px;font-size:10.25px;line-height:14px;color:#1d4a3c;width:88px;text-align:right;">5 271 470,15</div>
<div class="t" style="left:75px;top:507.00px;font-size:10.0px;line-height:14px;color:#1d4a3c;letter-spacing:0px;">Деньги в кассе</div>
<div class="t" style="left:86px;top:520.00px;font-size:10.0px;line-height:14px;color:#3a3a3a;letter-spacing:0px;">Касса организации</div>
<div class="t" style="left:402px;top:520.00px;font-size:10.2px;line-height:14px;color:#3a3a3a;">руб.</div>
<div class="t" style="left:455px;top:520.00px;font-size:10.25px;line-height:14px;color:#3a3a3a;width:88px;text-align:right;">133 660,00</div>
<div class="t" style="left:545px;top:520.00px;font-size:10.25px;line-height:14px;color:#3a3a3a;width:88px;text-align:right;">133 660,00</div>
<div class="t" style="left:635px;top:520.00px;font-size:10.25px;line-height:14px;color:#3a3a3a;width:88px;text-align:right;">133 660,00</div>
<div class="t" style="left:725px;top:520.00px;font-size:10.25px;line-height:14px;color:#3a3a3a;width:88px;text-align:right;">133 660,00</div>
<div class="t" style="left:815px;top:520.00px;font-size:10.25px;line-height:14px;color:#3a3a3a;width:88px;text-align:right;">133 660,00</div>
<div class="t" style="left:905px;top:520.00px;font-size:10.25px;line-height:14px;color:#3a3a3a;width:88px;text-align:right;">133 660,00</div>
<div class="t" style="left:97px;top:533.00px;font-size:10.0px;line-height:14px;color:#3a3a3a;letter-spacing:0px;">Денежный поток</div>
<div class="t" style="left:97px;top:546.00px;font-size:10.0px;line-height:14px;color:#3a3a3a;letter-spacing:0px;">Списание</div>
<div class="t" style="left:97px;top:559.00px;font-size:10.0px;line-height:14px;color:#3a3a3a;letter-spacing:0px;">Поступление</div>
<div class="t" style="left:75px;top:572.00px;font-size:10.0px;line-height:14px;color:#1d4a3c;letter-spacing:0px;">Деньги на расчетных счетах</div>
<div class="t" style="left:86px;top:584.00px;font-size:10.0px;line-height:14px;color:#3a3a3a;letter-spacing:-0.15px;">40702810100000001854, "ВЛАДИМИРСКИЙ" ФБ "ДИАЛОГ-ОПТИМ"</div>
<div class="t" style="left:86px;top:596.00px;font-size:10.0px;line-height:14px;color:#3a3a3a;letter-spacing:0px;">(000)</div>
<div class="t" style="left:402px;top:584.00px;font-size:10.2px;line-height:14px;color:#3a3a3a;">руб.</div>
<div class="t" style="left:455px;top:584.00px;font-size:10.25px;line-height:14px;color:#3a3a3a;width:88px;text-align:right;">4 853 260,15</div>
<div class="t" style="left:545px;top:584.00px;font-size:10.25px;line-height:14px;color:#3a3a3a;width:88px;text-align:right;">4 844 260,15</div>
<div class="t" style="left:635px;top:584.00px;font-size:10.25px;line-height:14px;color:#3a3a3a;width:88px;text-align:right;">4 819 260,15</div>
<div class="t" style="left:725px;top:584.00px;font-size:10.25px;line-height:14px;color:#3a3a3a;width:88px;text-align:right;">4 819 260,15</div>
<div class="t" style="left:815px;top:584.00px;font-size:10.25px;line-height:14px;color:#3a3a3a;width:88px;text-align:right;">4 782 760,15</div>
<div class="t" style="left:905px;top:584.00px;font-size:10.25px;line-height:14px;color:#3a3a3a;width:88px;text-align:right;">4 767 160,15</div>
<div class="t" style="left:97px;top:610.00px;font-size:10.0px;line-height:14px;color:#3a3a3a;letter-spacing:0px;">Денежный поток</div>
<div class="t" style="left:455px;top:610.00px;font-size:10.25px;line-height:14px;color:#3a3a3a;width:88px;text-align:right;">-9 000,00</div>
<div class="t" style="left:545px;top:610.00px;font-size:10.25px;line-height:14px;color:#3a3a3a;width:88px;text-align:right;">-25 000,00</div>
<div class="t" style="left:725px;top:610.00px;font-size:10.25px;line-height:14px;color:#3a3a3a;width:88px;text-align:right;">-36 500,00</div>
<div class="t" style="left:815px;top:610.00px;font-size:10.25px;line-height:14px;color:#3a3a3a;width:88px;text-align:right;">-15 600,00</div>
<div class="t" style="left:97px;top:622.00px;font-size:10.0px;line-height:14px;color:#3a3a3a;letter-spacing:0px;">Списание</div>
<div class="t" style="left:455px;top:622.00px;font-size:10.25px;line-height:14px;color:#3a3a3a;width:88px;text-align:right;">-9 000,00</div>
<div class="t" style="left:545px;top:622.00px;font-size:10.25px;line-height:14px;color:#3a3a3a;width:88px;text-align:right;">-25 000,00</div>
<div class="t" style="left:725px;top:622.00px;font-size:10.25px;line-height:14px;color:#3a3a3a;width:88px;text-align:right;">-36 500,00</div>
<div class="t" style="left:815px;top:622.00px;font-size:10.25px;line-height:14px;color:#3a3a3a;width:88px;text-align:right;">-15 600,00</div>
<div class="t" style="left:108px;top:635.00px;font-size:10.0px;line-height:14px;color:#3a3a3a;letter-spacing:-0.08px;">Заявка на расходование ДС РА00-000152 от 16.06.2025 16:17:15</div>
<div class="t" style="left:455px;top:635.00px;font-size:10.25px;line-height:14px;color:#3a3a3a;width:88px;text-align:right;">-9 000,00</div>
<div class="t" style="left:545px;top:635.00px;font-size:10.25px;line-height:14px;color:#3a3a3a;width:88px;text-align:right;">-25 000,00</div>
<div class="t" style="left:725px;top:635.00px;font-size:10.25px;line-height:14px;color:#3a3a3a;width:88px;text-align:right;">-36 500,00</div>
<div class="t" style="left:815px;top:635.00px;font-size:10.25px;line-height:14px;color:#3a3a3a;width:88px;text-align:right;">-15 600,00</div>
<div class="t" style="left:97px;top:648.00px;font-size:10.0px;line-height:14px;color:#3a3a3a;letter-spacing:0px;">Поступление</div>
<div class="t" style="left:86px;top:661.00px;font-size:10.0px;line-height:14px;color:#3a3a3a;letter-spacing:-0.15px;">41002810700100105075, ОАО "БАНК МОСКВЫ"</div>
<div class="t" style="left:402px;top:661.00px;font-size:10.2px;line-height:14px;color:#3a3a3a;">руб.</div>
<div class="t" style="left:455px;top:661.00px;font-size:10.25px;line-height:14px;color:#3a3a3a;width:88px;text-align:right;">370 650,00</div>
<div class="t" style="left:545px;top:661.00px;font-size:10.25px;line-height:14px;color:#3a3a3a;width:88px;text-align:right;">370 650,00</div>
<div class="t" style="left:635px;top:661.00px;font-size:10.25px;line-height:14px;color:#3a3a3a;width:88px;text-align:right;">370 650,00</div>
<div class="t" style="left:725px;top:661.00px;font-size:10.25px;line-height:14px;color:#3a3a3a;width:88px;text-align:right;">370 650,00</div>
<div class="t" style="left:815px;top:661.00px;font-size:10.25px;line-height:14px;color:#3a3a3a;width:88px;text-align:right;">370 650,00</div>
<div class="t" style="left:905px;top:661.00px;font-size:10.25px;line-height:14px;color:#3a3a3a;width:88px;text-align:right;">370 650,00</div>
</div>
<div class="r" style="left:1px;top:1px;width:999px;height:676px;box-sizing:border-box;border:1px solid #a3a3a3;border-right-color:#9a9a9a;"></div>
</body></html>
